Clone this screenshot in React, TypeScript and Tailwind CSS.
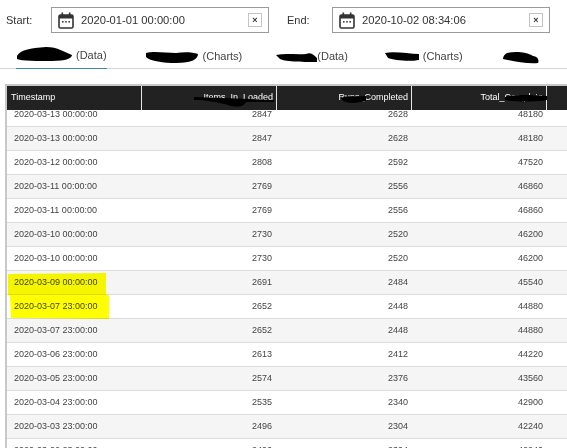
import React from "react";

const rows = [
  ["2020-03-13 00:00:00", "2847", "2628", "48180"],
  ["2020-03-13 00:00:00", "2847", "2628", "48180"],
  ["2020-03-12 00:00:00", "2808", "2592", "47520"],
  ["2020-03-11 00:00:00", "2769", "2556", "46860"],
  ["2020-03-11 00:00:00", "2769", "2556", "46860"],
  ["2020-03-10 00:00:00", "2730", "2520", "46200"],
  ["2020-03-10 00:00:00", "2730", "2520", "46200"],
  ["2020-03-09 00:00:00", "2691", "2484", "45540"],
  ["2020-03-07 23:00:00", "2652", "2448", "44880"],
  ["2020-03-07 23:00:00", "2652", "2448", "44880"],
  ["2020-03-06 23:00:00", "2613", "2412", "44220"],
  ["2020-03-05 23:00:00", "2574", "2376", "43560"],
  ["2020-03-04 23:00:00", "2535", "2340", "42900"],
  ["2020-03-03 23:00:00", "2496", "2304", "42240"],
  ["2020-03-02 23:00:00", "2496", "2304", "42240"],
];

function Calendar() {
  return (
    <svg width="16" height="17" viewBox="0 0 16 17" className="shrink-0">
      <rect x="1" y="3" width="14" height="13" rx="1.5" fill="none" stroke="#333" strokeWidth="1.6" />
      <rect x="1" y="3" width="14" height="3.5" fill="#333" />
      <rect x="3.5" y="0.5" width="1.6" height="3.5" fill="#333" />
      <rect x="10.9" y="0.5" width="1.6" height="3.5" fill="#333" />
      <rect x="4" y="9" width="1.6" height="1.6" fill="#444" />
      <rect x="7.2" y="9" width="1.6" height="1.6" fill="#444" />
      <rect x="10.4" y="9" width="1.6" height="1.6" fill="#444" />
    </svg>
  );
}

function DateBox({ value }: { value: string }) {
  return (
    <div className="flex h-[26px] w-[218px] items-center border border-[#9a9a9a] pl-[6px] pr-[6px]">
      <Calendar />
      <span className="ml-[7px] text-[11.2px] text-[#333]">{value}</span>
      <span className="ml-auto flex h-[14px] w-[14px] items-center justify-center border border-[#c4c4c4] text-[9px] font-bold leading-none text-[#333]">
        ×
      </span>
    </div>
  );
}

function Scribble({ w, h = 12, d, className = "" }: { w: number; h?: number; d: string; className?: string }) {
  return (
    <svg width={w} height={h} viewBox={`0 0 ${w} ${h}`} className={`shrink-0 ${className}`}>
      <path d={d} fill="#000" />
    </svg>
  );
}

function Tab({ children, ml }: { children: React.ReactNode; ml: string }) {
  return <div className={`flex h-[24px] items-center text-[11px] text-[#444] ${ml}`}>{children}</div>;
}

export default function App() {
  return (
    <div className="h-[448px] w-[567px] overflow-hidden bg-white font-['Liberation_Sans',Arial,sans-serif]">
      <div className="flex h-[41px] items-center pb-[1px]">
        <span className="ml-[6px] w-[45px] text-[11px] text-[#333]">Start:</span>
        <DateBox value="2020-01-01 00:00:00" />
        <span className="ml-[18px] w-[45px] text-[11px] text-[#333]">End:</span>
        <DateBox value="2020-10-02 08:34:06" />
      </div>

      <div className="mt-[3px] flex h-[25px] items-start border-b border-[#d4d4d4]">
        <Tab ml="ml-[16px]">
          <div className="relative flex h-[25px] items-center border-b border-[#3b87ad]">
            <Scribble
              w={56}
              h={14}
              className="-mt-[3px]"
              d="M1 9 C4 3 14 1 30 0 C42 0 48 5 56 8 C56 11 50 14 36 14 C22 14 6 14 1 12 Z"
            />
            <span className="ml-[4px]">(Data)</span>
          </div>
        </Tab>
        <Tab ml="ml-[39px]">
          <Scribble w={52} h={12} className="mt-[2px]" d="M0 2 C8 0 20 2 30 2 C38 1 46 1 52 3 C52 8 46 12 30 12 C18 12 4 10 0 6 Z" />
          <span className="ml-[5px]">(Charts)</span>
        </Tab>
        <Tab ml="ml-[34px]">
          <Scribble w={41} h={10} className="mt-[1px]" d="M0 3 C10 1 20 3 30 2 C34 0 37 2 41 6 L41 10 C30 10 10 10 4 7 Z" />
          <span>(Data)</span>
        </Tab>
        <Tab ml="ml-[37px]">
          <Scribble w={34} h={9} className="mt-[1px]" d="M0 1 C10 -1 24 2 34 2 L34 8 C24 10 8 8 3 6 Z" />
          <span className="ml-[4px]">(Charts)</span>
        </Tab>
        <Tab ml="ml-[40px]">
          <Scribble w={36} h={13} className="mt-[2px]" d="M4 2 C12 0 24 1 30 5 C36 6 36 10 35 12 C24 13 10 10 0 8 C0 5 2 3 4 2 Z" />
        </Tab>
      </div>

      <div className="ml-[5px] mt-[15px] border-l-2 border-t-2 border-[#c8c8c8]">
        <div className="flex h-[24px] items-center bg-[#222222] text-[9px] font-normal text-white">
          <div className="flex h-full w-[135px] items-center border-r border-[#e6e6e6] pl-[4px]">Timestamp</div>
          <div className="relative flex h-full w-[135px] items-center justify-end border-r border-[#e6e6e6] pr-[3px]">
            Items_In_Loaded
            <svg width="80" height="14" viewBox="0 0 80 14" className="absolute right-[2px] top-[8px]">
              <path d="M0 3 L80 6 L80 8 C70 8 58 8 52 8 C50 13 42 14 34 11 C24 8 10 6 0 6 Z" fill="#000" />
            </svg>
          </div>
          <div className="relative flex h-full w-[135px] items-center justify-end border-r border-[#e6e6e6] pr-[3px]">
            Runs_Completed
            <svg width="26" height="9" viewBox="0 0 26 9" className="absolute right-[44px] top-[9px]">
              <path d="M0 3 C8 0 18 2 25 1 L25 6 C18 8 8 9 2 6 Z" fill="#000" />
            </svg>
          </div>
          <div className="relative flex h-full w-[135px] items-center justify-end border-r border-[#e6e6e6] pr-[3px]">
            Total_Complete
            <svg width="42" height="8" viewBox="0 0 42 8" className="absolute -right-[1px] top-[8px]">
              <path d="M0 3 C10 0 30 1 42 2 L42 6 C30 8 10 8 0 6 Z" fill="#000" />
            </svg>
          </div>
          <div className="flex-1" />
        </div>

        <div className="relative h-[339px] overflow-hidden">
          <div className="-mt-[7px]">
            {rows.map((r, i) => (
              <div
                key={i}
                className={`flex h-[24px] items-center border-b border-[#dcdcdc] text-[9px] text-[#444] ${
                  i % 2 === 0 ? "bg-white" : "bg-[#f5f5f5]"
                }`}
              >
                <div className="w-[135px] pl-[7px]">{r[0]}</div>
                <div className="w-[135px] pr-[5px] text-right">{r[1]}</div>
                <div className="w-[135px] pr-[4px] text-right">{r[2]}</div>
                <div className="w-[135px] pr-[4px] text-right">{r[3]}</div>
              </div>
            ))}
          </div>
          <svg width="110" height="48" viewBox="0 0 110 48" className="absolute left-0 top-[163px] mix-blend-multiply">
            <path d="M1 1 L99 0 L99 22 L102 22 L102 46 L4 45 L3 23 L1 22 Z" fill="#ffff00" />
          </svg>
        </div>
      </div>
    </div>
  );
}
